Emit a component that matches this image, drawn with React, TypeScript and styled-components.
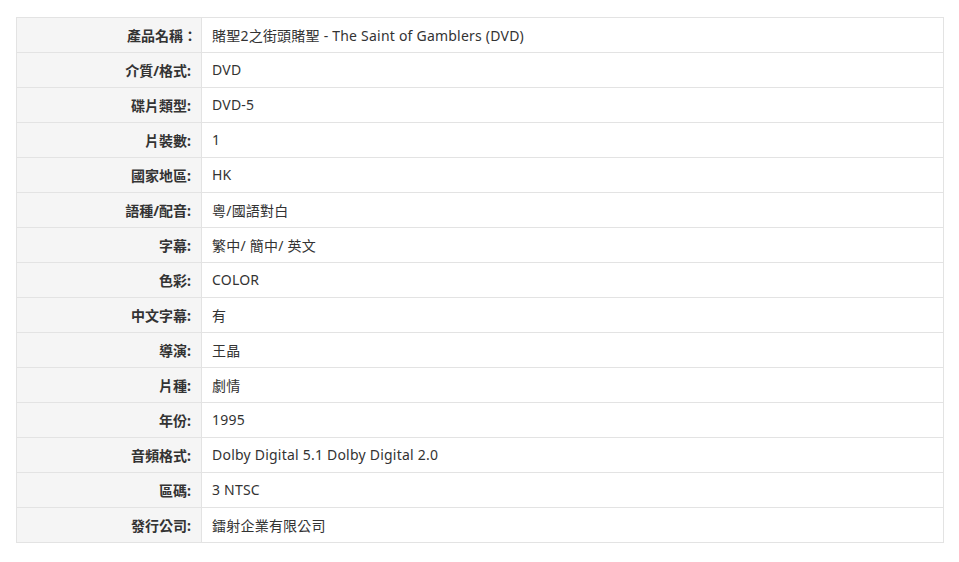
import React from "react";
import styled, { createGlobalStyle } from "styled-components";

const Global = createGlobalStyle`
  html, body { margin: 0; padding: 0; background: #ffffff; }
  body { font-family: "Noto Sans", "Noto Sans CJK TC", sans-serif; }
`;

const Page = styled.div`
  padding: 17px 15px 0 16px;
`;

const Table = styled.table`
  width: 928px;
  border-collapse: collapse;
  border: 1px solid #e3e3e3;
  font-size: 14px;
  color: #333333;
`;

const Row = styled.tr`
  height: 35px;
  border-bottom: 1px solid #e3e3e3;
`;

const Label = styled.th`
  width: 185px;
  box-sizing: border-box;
  background: #f5f5f5;
  text-align: right;
  font-weight: 700;
  padding: 0 10px 1px 0;
  border-right: 1px solid #e3e3e3;
  white-space: nowrap;
`;

const WideColon = styled.span`
  letter-spacing: -6px;
`;

const Value = styled.td`
  padding: 0 10px 1px;
  text-align: left;
  font-weight: 400;
  background: #ffffff;
  letter-spacing: 0.22px;
`;

const rows: [string, string][] = [
  ["產品名稱：", "賭聖2之街頭賭聖 - The Saint of Gamblers (DVD)"],
  ["介質/格式:", "DVD"],
  ["碟片類型:", "DVD-5"],
  ["片裝數:", "1"],
  ["國家地區:", "HK"],
  ["語種/配音:", "粵/國語對白"],
  ["字幕:", "繁中/ 簡中/ 英文"],
  ["色彩:", "COLOR"],
  ["中文字幕:", "有"],
  ["導演:", "王晶"],
  ["片種:", "劇情"],
  ["年份:", "1995"],
  ["音頻格式:", "Dolby Digital 5.1 Dolby Digital 2.0"],
  ["區碼:", "3 NTSC"],
  ["發行公司:", "鐳射企業有限公司"],
];

function renderLabel(k: string) {
  if (k.endsWith("：")) {
    return (
      <>
        {k.slice(0, -1)}
        <WideColon>：</WideColon>
      </>
    );
  }
  return k;
}

export default function App() {
  return (
    <>
      <Global />
      <Page>
        <Table>
          <tbody>
            {rows.map(([k, v]) => (
              <Row key={k}>
                <Label>{renderLabel(k)}</Label>
                <Value>{v}</Value>
              </Row>
            ))}
          </tbody>
        </Table>
      </Page>
    </>
  );
}
